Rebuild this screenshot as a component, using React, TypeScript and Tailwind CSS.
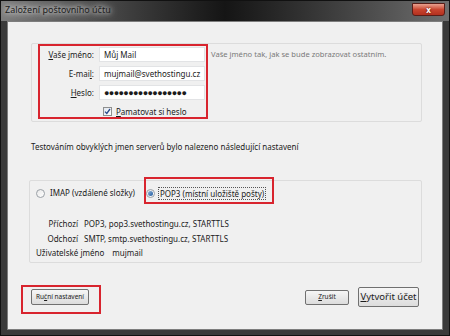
import React from "react";

const font = { fontFamily: '"Noto Sans", "Open Sans", sans-serif' };

function Field({ value, password }: { value: string; password?: boolean }) {
  return (
    <div className="h-[15px] w-[106px] bg-white border border-[#e2e3e5] flex items-center px-[4px] text-[8px] text-[#1b1b1b] overflow-hidden whitespace-nowrap">
      {password ? (
        <span className="tracking-[-0.6px] text-[9px] leading-none">{"●".repeat(17)}</span>
      ) : (
        value
      )}
    </div>
  );
}

function Radio({ checked }: { checked?: boolean }) {
  return (
    <span className="w-[9px] h-[9px] rounded-full border border-[#9aa0a6] bg-gradient-to-br from-[#e8e8e8] to-[#ffffff] flex items-center justify-center shrink-0">
      {checked && <span className="w-[5px] h-[5px] rounded-full bg-gradient-to-br from-[#8fb4d8] to-[#1d5aa0]" />}
    </span>
  );
}

export default function App() {
  return (
    <div className="relative w-[450px] h-[336px] bg-[#3a3a3a] flex flex-col text-[#1b1b1b] overflow-hidden" style={font}>
      {/* title bar */}
      <div className="h-[21px] flex items-start justify-between bg-gradient-to-r from-[#7c7c7c] via-[#151515] to-[#6f6f6f] border-t border-l border-r border-[#111]">
        <span className="ml-[4px] mt-[3px] text-[9px] leading-[12px] text-[#1c1c1c] [text-shadow:0_0_5px_#ffffff,0_0_8px_#e0e0e0]">
          Založení poštovního účtu
        </span>
        <div className="mt-[2px] mr-[4px] w-[33px] h-[13px] rounded-b-[3px] border border-[#5a1d17] bg-gradient-to-b from-[#e8a08f] via-[#c9452f] to-[#b3301e] flex items-center justify-center">
          <span className="text-[8px] font-bold text-white leading-none [text-shadow:0_0_2px_#4a0d05]">x</span>
        </div>
      </div>

      {/* frame body */}
      <div className="flex-1 flex px-[6px] border-l border-r border-[#111]">
        <div className="flex-1 bg-[#f0f0f0] border border-[#7d7d7d] flex flex-col pl-[23px] pr-[20px] pt-[21px] text-[8px]">
          {/* identity group */}
          <div className="h-[79px] border border-[#dcdcdc] rounded-[2px] pt-[1px] pl-[8px]">
            <div className="grid grid-cols-[54px_106px_auto] gap-x-[5px] auto-rows-[19px] items-center">
              <span className="text-right"><u>V</u>aše jméno:</span>
              <Field value="Můj Mail" />
              <span className="text-[7.6px] text-[#7a7a7a] whitespace-nowrap ml-[1px]">Vaše jméno tak, jak se bude zobrazovat ostatním.</span>

              <span className="text-right">E-mai<u>l</u>:</span>
              <Field value="mujmail@svethostingu.cz" />
              <span />

              <span className="text-right"><u>H</u>eslo:</span>
              <Field value="" password />
              <span />

              <span />
              <div className="flex items-center gap-[4px] pl-[4px]">
                <span className="w-[9px] h-[9px] border border-[#8e8f8f] bg-gradient-to-br from-[#dfe6ee] to-white flex items-center justify-center">
                  <svg width="7" height="7" viewBox="0 0 7 7">
                    <path d="M1 3.6 L2.8 5.5 L6 1" fill="none" stroke="#2a4a8a" strokeWidth="1.3" />
                  </svg>
                </span>
                <span className="whitespace-nowrap"><u>P</u>amatovat si heslo</span>
              </div>
              <span />
            </div>
          </div>

          <p className="mt-[19px] leading-[12px] whitespace-nowrap">
            Testováním obvyklých jmen serverů bylo nalezeno následující nastavení
          </p>

          {/* server group */}
          <div className="mt-[27px] -ml-[2px] h-[83px] border border-[#dcdcdc] rounded-[2px] flex flex-col">
            <div className="mt-[6px] flex items-center h-[12px]">
              <div className="ml-[6px] flex items-center gap-[5px]">
                <Radio />
                <span className="whitespace-nowrap">IMAP (vzdálené složky)</span>
              </div>
              <div className="ml-[11px] flex items-center gap-[3px]">
                <Radio checked />
                <span className="whitespace-nowrap border border-dotted border-[#555] px-[1px] leading-[11px]">POP3 (místní uložiště pošty)</span>
              </div>
            </div>
            <div className="mt-[18px] flex flex-col leading-[14.5px]">
              <div className="flex">
                <span className="w-[48px] text-right">Příchozí</span>
                <span className="ml-[6px] whitespace-nowrap">POP3, pop3.svethostingu.cz, STARTTLS</span>
              </div>
              <div className="flex">
                <span className="w-[48px] text-right">Odchozí</span>
                <span className="ml-[6px] whitespace-nowrap">SMTP, smtp.svethostingu.cz, STARTTLS</span>
              </div>
              <div className="flex pl-[6px]">
                <span className="whitespace-nowrap">Uživatelské jméno</span>
                <span className="ml-[8px]">mujmail</span>
              </div>
            </div>
          </div>

          {/* buttons */}
          <div className="mt-[24px] h-[20px] flex items-center pr-[3px]">
            <button className="h-[16px] w-[58px] border border-[#707070] rounded-[2px] bg-gradient-to-b from-[#f6f6f6] to-[#dcdcdc] text-[6.5px] leading-none whitespace-nowrap">
              Ru<u>č</u>ní nastavení
            </button>
            <div className="ml-auto flex items-center gap-[9px]">
              <button className="h-[15px] w-[44px] border border-[#707070] rounded-[2px] bg-gradient-to-b from-[#f6f6f6] to-[#dcdcdc] text-[6.5px] leading-none">
                <u>Z</u>rušit
              </button>
              <button className="h-[20px] w-[61px] border border-[#707070] rounded-[2px] bg-gradient-to-b from-[#f6f6f6] to-[#dcdcdc] text-[9.5px] leading-none whitespace-nowrap">
                <u>V</u>ytvořit účet
              </button>
            </div>
          </div>
        </div>
      </div>
      <div className="h-[6px] border-l border-r border-b border-[#111]" />

      {/* red annotation boxes */}
      <div className="absolute left-[38px] top-[44px] w-[170px] h-[75px] border-2 border-[#d8242e]" />
      <div className="absolute left-[144px] top-[177px] w-[130px] h-[27px] border-2 border-[#d8242e]" />
      <div className="absolute left-[21px] top-[285px] w-[80px] h-[29px] border-2 border-[#d8242e]" />
    </div>
  );
}
